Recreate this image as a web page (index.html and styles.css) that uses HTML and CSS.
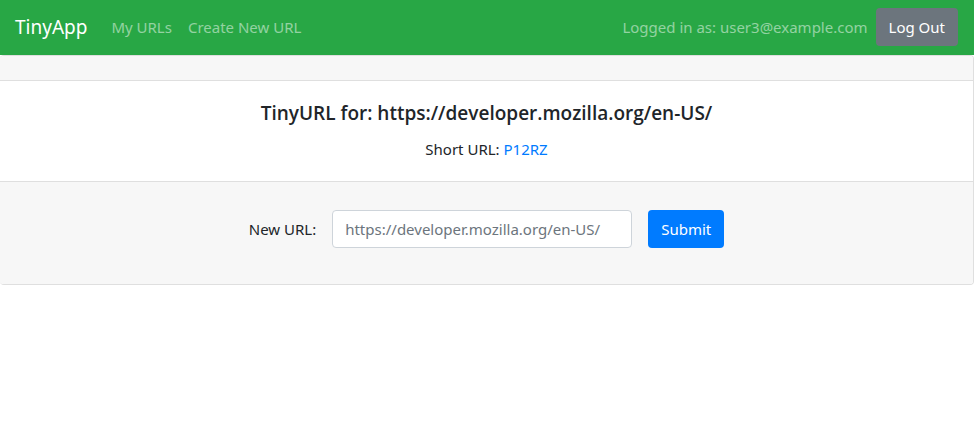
FILE: index.html
```html
<!DOCTYPE html>
<html lang="en">
<head>
  <meta charset="utf-8">
  <meta name="viewport" content="width=device-width, initial-scale=1">
  <title>TinyApp</title>
  <link rel="stylesheet" href="styles.css">
</head>
<body>
  <header class="navbar">
    <a class="brand" href="#">TinyApp</a>
    <nav class="nav-links">
      <a class="nav-link" href="#">My URLs</a>
      <a class="nav-link" href="#">Create New URL</a>
    </nav>
    <form class="session">
      <span class="session-user">Logged in as: user3@example.com</span>
      <button class="btn btn-secondary" type="button">Log Out</button>
    </form>
  </header>
  <main class="card">
    <div class="card-header"></div>
    <section class="card-body">
      <h1 class="card-title">TinyURL for: https://developer.mozilla.org/en-US/</h1>
      <p class="card-text">Short URL: <a class="short-link" href="#">P12RZ</a></p>
    </section>
    <footer class="card-footer">
      <form class="edit-form">
        <label class="edit-label" for="long-url">New URL:</label>
        <input class="edit-input" id="long-url" type="text" placeholder="https://developer.mozilla.org/en-US/">
        <button class="btn btn-primary" type="button">Submit</button>
      </form>
    </footer>
  </main>
</body>
</html>
```
FILE: styles.css
```css
* {
  box-sizing: border-box;
}

body {
  margin: 0;
  background: #fff;
  color: #212529;
  font-family: "Segoe UI", "Noto Sans", "Open Sans", sans-serif;
  font-size: 15px;
  line-height: 24px;
}

a {
  color: #007bff;
  text-decoration: none;
}

.navbar {
  display: flex;
  align-items: center;
  padding: 7px 16px 8px 15px;
  background: #28a745;
}

.navbar .brand {
  margin-right: 16px;
  color: #fff;
  font-size: 19px;
}

.nav-links {
  display: flex;
}

.navbar .nav-link {
  padding: 8px;
  color: rgba(255, 255, 255, 0.5);
}

.session {
  display: flex;
  align-items: center;
  gap: 8px;
  margin-left: auto;
}

.session-user {
  color: rgba(255, 255, 255, 0.5);
}

.btn {
  padding: 6px 12px;
  border: 1px solid transparent;
  border-radius: 4px;
  color: #fff;
  font: inherit;
}

.btn-secondary {
  background: #6c757d;
}

.btn-primary {
  background: #007bff;
}

.card {
  overflow: hidden;
  border: 1px solid #dfdfdf;
  border-left: 0;
  border-radius: 4px;
  text-align: center;
}

.card-header {
  padding: 12px;
  border-bottom: 1px solid #dfdfdf;
  background: #f7f7f7;
}

.card-body {
  padding: 20px;
}

.card-title {
  margin: 0 0 12px;
  font-family: "Segoe UI", "Open Sans", sans-serif;
  font-size: 19px;
  font-weight: 600;
  line-height: 24px;
}

.card-text {
  margin: 0;
}

.card-footer {
  padding: 28px 20px 36px;
  border-top: 1px solid #dfdfdf;
  background: #f7f7f7;
}

.edit-form {
  display: flex;
  align-items: center;
  justify-content: center;
  gap: 16px;
}

.edit-input {
  width: 300px;
  padding: 6px 12px;
  border: 1px solid #ced4da;
  border-radius: 4px;
  background: #fff;
  color: #495057;
  font: inherit;
}

.edit-input::placeholder {
  color: #6c757d;
  opacity: 1;
}
```
